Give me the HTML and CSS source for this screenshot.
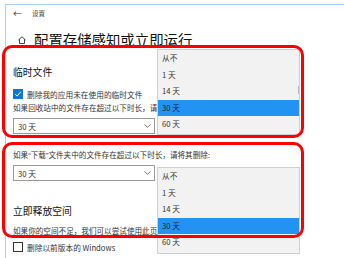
FILE: index.html
```html
<!DOCTYPE html>
<html lang="zh-CN">
<head>
<meta charset="utf-8">
<link rel="stylesheet" href="styles.css">
</head>
<body>
<div class="window">
  <div class="titlebar">
    <span class="back">←</span>
    <span class="apptitle">设置</span>
  </div>
  <div class="headrow">
    <svg class="home" width="8" height="8" viewBox="0 0 8 8"><path d="M0.5 4 L4 0.8 L7.5 4 M1.5 3.2 V7.5 H6.5 V3.2" fill="none" stroke="#333" stroke-width="0.9"/></svg>
    <h1 class="heading">配置存储感知或立即运行</h1>
  </div>

  <div class="content">
    <h2 class="section first">临时文件</h2>
    <label class="check-row first-check">
      <span class="box checked"><svg width="8" height="8" viewBox="0 0 8 8"><path d="M1.2 4.2 L3.2 6 L6.8 1.8" fill="none" stroke="#fff" stroke-width="1"/></svg></span>
      <span class="check-label">删除我的应用未在使用的临时文件</span>
    </label>
    <p class="line t1">如果回收站中的文件存在超过以下时长，请</p>
    <div class="select">
      <span>30 天</span>
      <svg width="7" height="4" viewBox="0 0 7 4"><path d="M0.5 0.5 L3.5 3.3 L6.5 0.5" fill="none" stroke="#555" stroke-width="0.8"/></svg>
    </div>
    <p class="line t2">如果<span class="q">“</span>下载<span class="q">”</span>文件夹中的文件存在超过以下时长，请将其删除:</p>
    <div class="select">
      <span>30 天</span>
      <svg width="7" height="4" viewBox="0 0 7 4"><path d="M0.5 0.5 L3.5 3.3 L6.5 0.5" fill="none" stroke="#555" stroke-width="0.8"/></svg>
    </div>
    <h2 class="section second">立即释放空间</h2>
    <p class="line t3">如果你的空间不足，我们可以尝试使用此页</p>
    <label class="check-row second-check">
      <span class="box"></span>
      <span class="check-label">删除以前版本的 Windows</span>
    </label>
  </div>
</div>

<ul class="popup p1">
  <li>从不</li>
  <li>1 天</li>
  <li>14 天</li>
  <li class="sel">30 天</li>
  <li>60 天</li>
  <span class="scrollmark"></span>
</ul>
<ul class="popup p2">
  <li>从不</li>
  <li>1 天</li>
  <li>14 天</li>
  <li class="sel">30 天</li>
  <li>60 天</li>
</ul>

<div class="mark m1"></div>
<div class="mark m2"></div>
</body>
</html>
```

FILE: styles.css
```css
* { box-sizing: border-box; }
html, body { margin: 0; padding: 0; background: #fff; }
body {
  position: relative;
  width: 344px;
  height: 258px;
  overflow: hidden;
  font-family: "Noto Sans CJK SC", "Noto Sans", sans-serif;
  color: #222;
}
.window {
  margin: 4px 0 0 5px;
  height: 254px;
  border-top: 1px solid #a8d0f0;
  border-left: 1px solid #a8d0f0;
}
.titlebar {
  height: 16px;
  display: flex;
  align-items: center;
  padding-left: 7px;
}
.back { font-size: 9px; color: #333; line-height: 1; width: 19px; }
.apptitle { font-size: 6.5px; color: #444; line-height: 1; }
.headrow {
  margin-top: 9px;
  height: 20px;
  display: flex;
  align-items: center;
  padding-left: 12px;
}
.home { margin-right: 8px; }
.heading {
  margin: 0;
  font-size: 14.4px;
  font-weight: 400;
  color: #111;
  line-height: 20px;
  white-space: nowrap;
}
.content { padding-left: 7px; }
.section {
  margin: 0;
  font-size: 9.8px;
  font-weight: 400;
  line-height: 14px;
  color: #111;
}
.section.first { margin-top: 15px; }
.section.second { margin-top: 23px; }
.check-row {
  display: flex;
  align-items: center;
  height: 11px;
}
.first-check { margin-top: 9.5px; }
.second-check { margin-top: 5.5px; }
.box {
  width: 10px;
  height: 10px;
  border: 1px solid #333;
  display: flex;
  align-items: center;
  justify-content: center;
  margin-right: 4px;
}
.box.checked { background: #0a78d4; border-color: #0a78d4; }
.check-label { font-size: 7.7px; color: #333; white-space: nowrap; line-height: 11px; }
.line {
  margin: 0;
  font-size: 7.6px;
  line-height: 10px;
  height: 10px;
  color: #333;
  white-space: nowrap;
}
.q { font-family: "Liberation Sans", sans-serif; }
.t1 { margin-top: 3.5px; }
.t2 { margin-top: 16px; }
.t3 { margin-top: 8px; }
.select {
  margin-top: 5px;
  width: 142px;
  height: 16px;
  border: 1px solid #9a9a9a;
  display: flex;
  align-items: center;
  justify-content: space-between;
  padding: 0 3px 0 4px;
  font-size: 7.7px;
  color: #333;
}
.popup {
  position: absolute;
  left: 157px;
  width: 143px;
  margin: 0;
  padding: 0;
  list-style: none;
  background: #f2f2f2;
  border: 1px solid #d0d0d0;
}
.popup li {
  height: 16.5px;
  line-height: 16.5px;
  padding-left: 4px;
  font-size: 7.7px;
  color: #333;
}
.popup li.sel { background: #2293f2; color: #222; }
.p1 { top: 49px; padding-bottom: 1px; }
.p2 { top: 167px; padding-bottom: 2px; }
.scrollmark {
  position: absolute;
  right: 0;
  top: 36px;
  width: 1px;
  height: 8px;
  background: #bbb;
}
.mark {
  position: absolute;
  border: 3px solid #ff0000;
  border-radius: 10px;
}
.m1 { left: 2px; top: 45px; width: 302px; height: 93px; }
.m2 { left: 2px; top: 142px; width: 302px; height: 96px; }
```
